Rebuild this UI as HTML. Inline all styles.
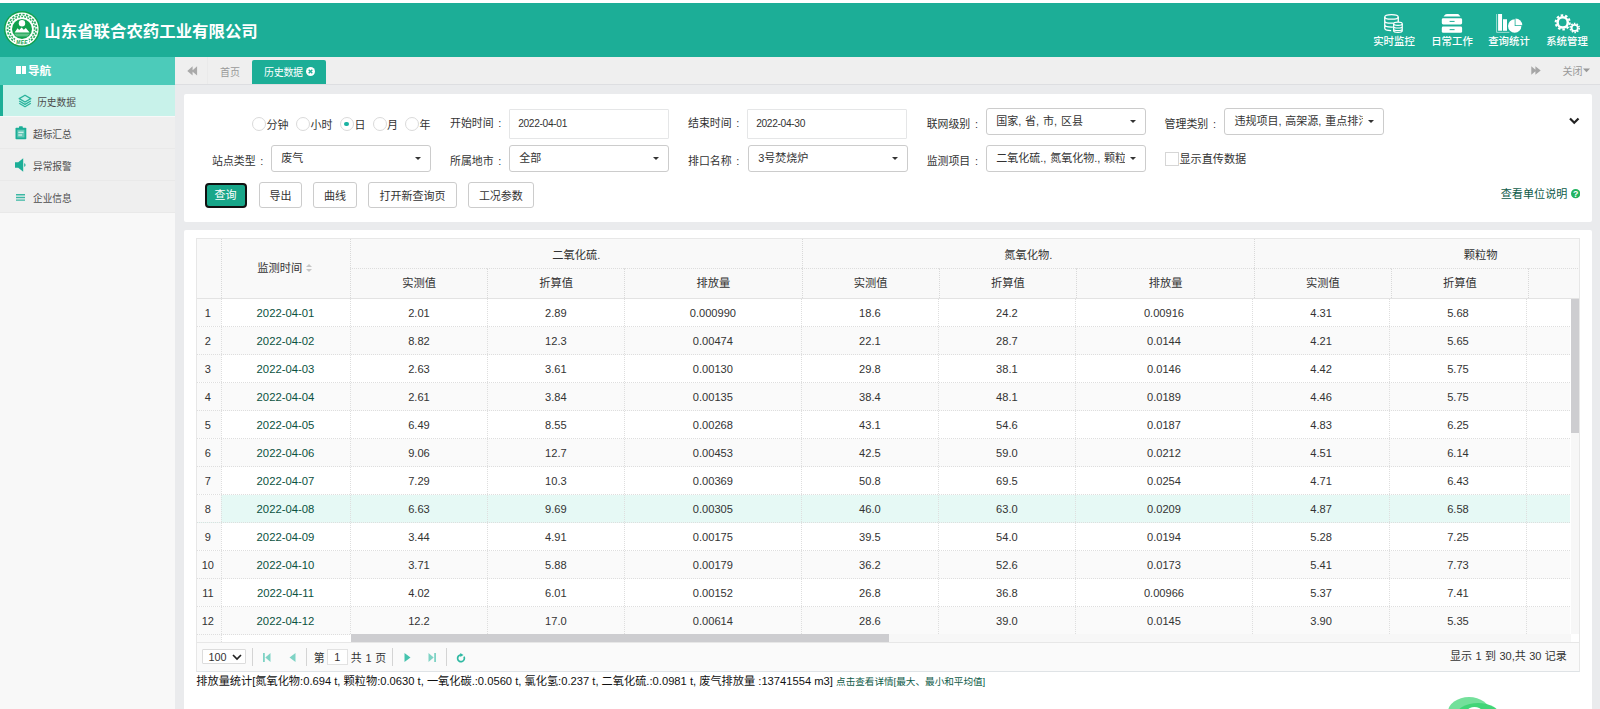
<!DOCTYPE html>
<html lang="zh-CN">
<head>
<meta charset="utf-8">
<title>历史数据</title>
<style>
*{box-sizing:border-box}
html,body{margin:0;padding:0}
body{width:1600px;height:709px;overflow:hidden;position:relative;background:#eaebed;font-family:"Liberation Sans","Noto Sans CJK SC",sans-serif;font-size:11px;color:#333;line-height:1}
.abs{position:absolute}
#strip{position:absolute;left:0;top:0;width:1600px;height:3px;background:#fff}
#hdr{position:absolute;left:0;top:3px;width:1600px;height:54px;background:#1cae97}
#logo{position:absolute;left:4.3px;top:8.2px;width:36px;height:36px}
#title{position:absolute;left:44.3px;top:16.5px;font-size:16.43px;font-weight:bold;color:#fff;line-height:22px;white-space:nowrap;letter-spacing:0}
.tm{position:absolute;top:0;width:58px;height:54px;color:#fff;text-align:center}
.tm svg{position:absolute;top:0;left:0}
.tm span{position:absolute;left:0;width:58px;top:32.6px;font-size:10.4px;line-height:12px;font-weight:500;white-space:nowrap}
#side{position:absolute;left:0;top:57px;width:175px;height:652px;background:#f8f8f8}
#navh{position:absolute;left:0;top:0;width:175px;height:28px;background:#4ccbba;color:#fff}
#navh .ic{position:absolute;left:16px;top:9px;width:10px;height:8px}
#navh .ic:before,#navh .ic:after{content:"";position:absolute;top:0;width:4.5px;height:8px;background:#fff}
#navh .ic:before{left:0}#navh .ic:after{left:5.5px}
#navh span{position:absolute;left:28px;top:7px;font-size:11.6px;font-weight:bold;line-height:14px}
.mi{position:absolute;left:0;width:175px;height:32px;background:#efefef;border-bottom:1px solid #e9e9e9;color:#4d4d4d;font-size:9.7px}
.mi span{position:absolute;left:33px;top:12.4px;line-height:12px;white-space:nowrap}
.mi svg{position:absolute}
.mi.act{background:#c8f2ea;border-left:3px solid #1cae97;border-bottom:none}
#tabs{position:absolute;left:175px;top:57px;width:1425px;height:28px;background:#efefef;border-bottom:1px solid #dddee1}
#tabs .lb{position:absolute;left:0;top:0;width:33px;height:27px;border-right:1px solid #eaeaea}
#tabs .home{position:absolute;left:45px;top:9.8px;font-size:10px;color:#999;line-height:12px}
#tabs .cur{position:absolute;left:77px;top:3px;width:74px;height:24px;background:#1cae97;border-radius:2px 2px 0 0;color:#fff;font-size:10px}
#tabs .cur span{position:absolute;left:12px;top:6.7px;line-height:12px;white-space:nowrap;letter-spacing:-0.3px}
#tabs .close{position:absolute;right:10px;top:9px;font-size:10px;color:#999;line-height:12px}
.panel{position:absolute;left:184px;width:1408px;background:#fff;border-radius:2px}
.p1{top:94px;height:127.5px}
.p2{top:230px;height:490px}
.lbl{position:absolute;font-size:10.9px;line-height:14px;color:#333;white-space:nowrap}
.inp{position:absolute;height:29.5px;width:160px;border:1px solid #e5e6e7;border-radius:1px;background:#fff;font-size:10.2px;letter-spacing:-0.33px;line-height:27.5px;padding-left:8.2px;color:#333}
.sel{position:absolute;height:26.5px;width:160px;border:1px solid #ccc;border-radius:3px;background:#fff;font-size:10.9px;line-height:24px;padding-left:9.2px;color:#333;white-space:nowrap;overflow:hidden}
.sel i{position:absolute;right:9.5px;top:11px;width:0;height:0;border-left:3.4px solid transparent;border-right:3.4px solid transparent;border-top:3.6px solid #333}
.sel .tx{display:block;overflow:hidden;white-space:nowrap;word-spacing:0.8px;font-size:11px}
.rad{position:absolute;width:14.2px;height:14.2px;border:1.1px solid #dadada;border-radius:50%;background:#fff;top:23.1px;margin-left:-0.3px}
.rad.on:after{content:"";position:absolute;left:3.6px;top:3.6px;width:4.8px;height:4.8px;border-radius:50%;background:#1bb3a2}
.rl{position:absolute;top:23.5px;font-size:11px;line-height:14px;color:#333;white-space:nowrap}
.btn{position:absolute;top:87.7px;height:26.8px;border:1px solid #ccc;border-radius:3px;background:#fff;font-size:11px;line-height:27.4px;text-align:center;color:#333;white-space:nowrap}
.btn.pri{top:88.6px;height:25.6px;background:#18a689;border:2px solid #111;color:#fff;line-height:21.8px;border-radius:4px;text-indent:-1px}
/* grid */
.grid{position:absolute;left:12.25px;top:8px;width:1383.25px;height:404px;border:1px solid #e7e7e7;border-bottom:none;overflow:hidden;background:#fff}
.gh{position:absolute;left:-1.4px;top:-1px;width:1600px;height:60.5px;background:#f9f9f9;border-bottom:1px solid #e3e3e3}
.hc{position:absolute;text-align:center;font-size:11.25px;color:#333;border-left:1px dotted #d9d9d9;white-space:nowrap}
.gb{position:absolute;left:-1.4px;top:59.5px;width:1374.5px;height:344px;overflow:hidden}
.r{position:absolute;left:0;width:1600px;height:28px;background:#fff;border-bottom:1px dotted #dedede}
.r.alt{background:#fafafa}
.r.hl{background:#e6f9f5}
.c{position:absolute;top:0;height:27px;line-height:28.1px;text-align:center;font-size:11.1px;color:#333;border-left:1px dotted #dedede;white-space:nowrap}
.c.n{background:#fafafa;border-left:none;height:27px;font-size:11px}
.c.d{color:#0b5241;background:inherit;font-size:11.3px;padding-right:1px}
.r .c.d{}
.sort{display:inline-block;position:relative;width:7px;height:9px;margin-left:3.5px;vertical-align:-1px}
.sort i,.sort b{position:absolute;left:0;width:0;height:0;border-left:3.2px solid transparent;border-right:3.2px solid transparent}
.sort i{top:0;border-bottom:3.6px solid #c6c6c6}
.sort b{top:5px;border-top:3.6px solid #c6c6c6}
.vsb{position:absolute;left:1373.5px;top:59.5px;width:8px;height:344px;background:#f7f7f7}
.vth{position:absolute;left:0.5px;top:0;width:7.5px;height:134.6px;background:#cdcdd0}
.hsb{position:absolute;left:153.25px;top:395px;width:1229px;height:8px;background:#f7f7f7}
.hth{position:absolute;left:0;top:0;width:538px;height:8px;background:#cdcdd0}
/* pager */
.pager{position:absolute;left:12.25px;top:412px;width:1383.25px;height:29.75px;background:#fafafa;border:1px solid #e7e7e7;border-bottom:1.5px solid #dfe3e6;font-size:11px;color:#333}
.pager .sp{position:absolute;top:4.5px;width:1px;height:18px;background:#d4d4d4}
.pager svg{position:absolute}
.stats{position:absolute;left:12.25px;top:443.8px;font-size:11.19px;line-height:14px;color:#111;white-space:nowrap}
.stats a{color:#0d5a48;text-decoration:none;font-size:9.6px}
.blob{position:absolute;left:1447.5px;top:696.8px;width:42px;height:30px;border-radius:50%;background:#74e09b}
.blob2{position:absolute;left:1456px;top:702.5px;width:44px;height:26px;border-radius:50%;background:#42d577}
.corner{position:absolute;left:1373.5px;top:394.8px;width:9px;height:9px;background:#fff}
.co{margin-left:4.75px}
.blob3{position:absolute;left:1467.5px;top:707.4px;width:13px;height:6px;border-radius:50%;background:#fff}

</style>
</head>
<body>
<div id="strip"></div>
<div id="hdr">
<svg id="logo" viewBox="0 0 36 36">
<circle cx="18" cy="18" r="18" fill="#12a14e"/>
<circle cx="18" cy="18" r="16.600" fill="#fff"/>
<circle cx="18" cy="18" r="14.500" fill="none" stroke="#2aab60" stroke-width="1.700" stroke-dasharray="2.200 1.400"/>
<circle cx="18" cy="18" r="12.500" fill="none" stroke="#2aab60" stroke-width="1.500" stroke-dasharray="1.900 1.200" stroke-dashoffset="1.200"/>
<path d="M11.500 27.500 L24.500 27.500 L26 33 L10 33 Z" fill="#fff"/>
<circle cx="18" cy="18" r="10.800" fill="#fff"/>
<circle cx="18" cy="18" r="10" fill="#12a14e"/>
<circle cx="18" cy="12.200" r="3.200" fill="#fff"/>
<path d="M10.600 21.600 L13.600 17.300 L15.200 19 L17.600 16.400 L19.800 18.800 L21.800 17 L25.600 21.600 Z" fill="#fff"/>
<path d="M10.600 23.200 H25.400 M11.800 24.800 H24.200" stroke="#8fd6ad" stroke-width="0.900" fill="none"/>
<text x="18" y="32.600" font-size="4.800" font-weight="bold" font-style="italic" text-anchor="middle" fill="#12a14e" font-family="Liberation Sans, sans-serif" letter-spacing="0.300">MEE</text>
</svg>
<div id="title">山东省联合农药工业有限公司</div>
<div class="tm" style="left:1365px"><svg width="58" height="34" viewBox="0 0 58 34"><g fill="none" stroke="#fff" stroke-width="1.300"><ellipse cx="26.500" cy="13.900" rx="6.750" ry="2.250"/><path d="M19.750 13.900v11.400c0 1.200 2.600 2.250 6.400 2.250M19.750 17.900c0 1.200 2.900 2.250 6.750 2.250 0.800 0 1.500 0 2.200-0.100M19.750 21.800c0 1.200 2.900 2.250 6.750 2.250h1.400M33.250 13.900v5"/><ellipse cx="32.950" cy="20.700" rx="4.300" ry="1.600" stroke-width="1.200"/><path d="M28.650 20.700v7c0 .900 1.900 1.600 4.300 1.600s4.300-.7 4.300-1.600v-7M28.650 23.400c0 .900 1.900 1.600 4.300 1.600s4.300-.7 4.300-1.600M28.650 25.900c0 .900 1.900 1.600 4.300 1.600s4.300-.7 4.300-1.600" stroke-width="1.200"/></g></svg><span>实时监控</span></div>
<div class="tm" style="left:1423px"><svg width="58" height="34" viewBox="0 0 58 34"><g fill="#fff"><path d="M24.300 11h10.400q1 0 1.500 0.900l1.300 1.500H20.500l1.300-1.500q.5-.9 2.500-.9z"/><rect x="18.800" y="15.300" width="20.300" height="6.200" rx="1.400"/><rect x="18.800" y="23.600" width="20.300" height="6.200" rx="1.400"/></g><path d="M27 18.400h4.200M27 26.650h4.200" stroke="#1cae97" stroke-width="1" stroke-linecap="round"/></svg><span>日常工作</span></div>
<div class="tm" style="left:1480px"><svg width="58" height="34" viewBox="0 0 58 34"><path d="M16.600 11.050v18.300h12.800" fill="none" stroke="#fff" stroke-width="0.700" opacity=".85"/><path d="M18.100 11.050h3.950v16.650h-3.950z M23 16.300h4v11.400h-4z" fill="#fff"/><path d="M34.700 16.350a6.700 6.700 0 1 0 6.700 6.700H34.700z" fill="#fff"/><path d="M35.500 15.500a6.800 6.800 0 0 1 6.800 6.800h-6.800z" fill="#fff"/></svg><span>查询统计</span></div>
<div class="tm" style="left:1538px"><svg width="58" height="34" viewBox="0 0 58 34"><g fill="none" stroke="#fff"><circle cx="24.700" cy="19.400" r="5.100" stroke-width="2.500"/><circle cx="24.700" cy="19.400" r="7.050" stroke-width="2.100" stroke-dasharray="2.500 1.930"/><circle cx="36.700" cy="24.900" r="3.050" stroke-width="1.700"/><circle cx="36.700" cy="24.900" r="4.450" stroke-width="1.600" stroke-dasharray="1.550 1.246"/></g></svg><span>系统管理</span></div>
</div>
<div id="side">
<div id="navh"><div class="ic"></div><span>导航</span></div>
<div class="mi act" style="top:28px;height:31.200px"><svg style="left:15px;top:9px" width="14" height="14" viewBox="0 0 14 14"><g fill="none" stroke="#2bb39d" stroke-width="1.300" stroke-linejoin="round"><path d="M7 1.200L12.800 4.600 7 8 1.200 4.600z"/><path d="M1.200 7L7 10.400 12.800 7"/><path d="M1.200 9.300L7 12.700 12.800 9.300"/></g></svg><span style="left:34.200px;top:11.600px">历史数据</span></div>
<div class="mi" style="top:59.500px"><svg style="left:14.500px;top:9.500px" width="12" height="14" viewBox="0 0 12 14"><rect x="0.500" y="1.700" width="10.800" height="11.600" rx="0.800" fill="#1cae97"/><rect x="4" y="0.300" width="3.800" height="2.400" rx="0.600" fill="#1cae97"/><rect x="2.300" y="3.700" width="7.200" height="7.800" fill="#62c8b6"/><path d="M3.300 6.300h5.200M3.300 9h3.800" stroke="#fff" stroke-width="1.100" opacity=".92"/></svg><span>超标汇总</span></div>
<div class="mi" style="top:91.500px"><svg style="left:13.800px;top:9.500px" width="12" height="14" viewBox="0 0 12 14"><path d="M1 4.200h3.200l5-4v13.600l-5-4H1z" fill="#1cae97"/><path d="M10.300 5.600a1.800 1.800 0 0 1 0 2.800" stroke="#1cae97" stroke-width="1.100" fill="none"/></svg><span>异常报警</span></div>
<div class="mi" style="top:123.500px"><svg style="left:15.600px;top:13.100px" width="9.500" height="8" viewBox="0 0 9.500 8"><path d="M0 0.800h9.500M0 3.450h9.500M0 6.100h9.500" stroke="#3bb8a4" stroke-width="1.400"/></svg><span>企业信息</span></div>
</div>
<div id="tabs">
<div class="lb"><svg class="abs" style="left:12px;top:8.600px" width="11" height="10" viewBox="0 0 11 10"><path d="M5.600 0.200v9.400L0.300 4.900z M10.100 0.200v9.400L4.800 4.900z" fill="#a9a9a9"/></svg></div>
<div class="home">首页</div>
<div class="cur"><span>历史数据</span><svg class="abs" style="left:53.500px;top:7.200px" width="9" height="9" viewBox="0 0 9 9"><circle cx="4.500" cy="4.500" r="4.500" fill="#fff"/><path d="M2.700 2.700l3.600 3.600M6.300 2.700l-3.600 3.600" stroke="#1cae97" stroke-width="1.400"/></svg></div>
<svg class="abs" style="left:1356px;top:8.600px" width="10" height="9" viewBox="0 0 10 9"><path d="M0.300 0.200v8.600L5.300 4.500z M4.400 0.200v8.600L9.700 4.500z" fill="#a6a6a6"/></svg>
<div class="close">关闭<svg width="7" height="5" viewBox="0 0 7 5" style="vertical-align:2.200px;margin-left:0.500px"><path d="M0 0.600h7L3.500 4.300z" fill="#999"/></svg></div>
</div>
<div class="panel p1">
<div class="rad" style="left:68px"></div><div class="rl" style="left:82.500px">分钟</div>
<div class="rad" style="left:112px"></div><div class="rl" style="left:126.500px">小时</div>
<div class="rad on" style="left:156px"></div><div class="rl" style="left:170.500px">日</div>
<div class="rad" style="left:189px"></div><div class="rl" style="left:203px">月</div>
<div class="rad" style="left:221px"></div><div class="rl" style="left:235.500px">年</div>
<div class="lbl" style="left:266px;top:21.500px">开始时间<span class="co">:</span></div>
<div class="inp" style="left:325px;top:15px">2022-04-01</div>
<div class="lbl" style="left:504px;top:21.500px">结束时间<span class="co">:</span></div>
<div class="inp" style="left:563px;top:15px">2022-04-30</div>
<div class="lbl" style="left:742.700px;top:23px">联网级别<span class="co">:</span></div>
<div class="sel" style="left:802px;top:14px"><span class="tx" style="width:128px">国家, 省, 市, 区县</span><i></i></div>
<div class="lbl" style="left:980.600px;top:23px">管理类别<span class="co">:</span></div>
<div class="sel" style="left:1040.250px;top:14px"><span class="tx" style="width:128.500px">违规项目, 高架源, 重点排污单位</span><i></i></div>
<div class="lbl" style="left:28px;top:59.600px">站点类型<span class="co">:</span></div>
<div class="sel" style="left:87px;top:51px"><span class="tx">废气</span><i></i></div>
<div class="lbl" style="left:266px;top:59.600px">所属地市<span class="co">:</span></div>
<div class="sel" style="left:325px;top:51px"><span class="tx">全部</span><i></i></div>
<div class="lbl" style="left:504px;top:59.600px">排口名称<span class="co">:</span></div>
<div class="sel" style="left:564px;top:51px"><span class="tx">3号焚烧炉</span><i></i></div>
<div class="lbl" style="left:742.700px;top:59.600px">监测项目<span class="co">:</span></div>
<div class="sel" style="left:802px;top:51px"><span class="tx" style="width:129.200px">二氧化硫., 氮氧化物., 颗粒物</span><i></i></div>
<div class="abs" style="left:981px;top:58.250px;width:14px;height:14px;border:1px solid #d6d6d6;background:#fff"></div>
<div class="lbl" style="left:995.500px;top:57.900px;font-size:11.100px">显示直传数据</div>
<div class="btn pri" style="left:21px;width:42px">查询</div>
<div class="btn" style="left:75px;width:43px">导出</div>
<div class="btn" style="left:129px;width:44px">曲线</div>
<div class="btn" style="left:184px;width:89px">打开新查询页</div>
<div class="btn" style="left:284px;width:65.750px">工况参数</div>
<svg class="abs" style="left:1385px;top:22.500px" width="10.500" height="8" viewBox="0 0 10.500 8"><path d="M1 1.500l4.250 4.200L9.500 1.500" fill="none" stroke="#222" stroke-width="2.200"/></svg>
<div class="lbl" style="left:1316.750px;top:93px;font-size:11.100px;color:#0d5a48">查看单位说明</div>
<svg class="abs" style="left:1386.750px;top:95.400px" width="9.250" height="9.250" viewBox="0 0 10 10"><circle cx="5" cy="5" r="5" fill="#23b35f"/><text x="5" y="8.300" font-size="9.500" font-weight="bold" text-anchor="middle" fill="#fff" font-family="Liberation Sans, sans-serif">?</text></svg>
</div>
<div class="panel p2">
<div class="grid">
<div class="gh">
<div class="hc" style="left:0;top:0;width:25px;height:60px;border-left:none"></div>
<div class="hc" style="left:25px;top:0;width:129.25px;height:60px;line-height:60px;padding-right:2px">监测时间<span class="sort"><i></i><b></b></span></div>
<div class="hc" style="left:154.25px;top:0;width:451.50px;height:30px;line-height:35px">二氧化硫.</div>
<div class="hc" style="left:154.25px;top:30px;width:137.00px;height:30px;line-height:29px;border-top:1px dotted #ddd">实测值</div>
<div class="hc" style="left:291.25px;top:30px;width:137.00px;height:30px;line-height:29px;border-top:1px dotted #ddd">折算值</div>
<div class="hc" style="left:428.25px;top:30px;width:177.50px;height:30px;line-height:29px;border-top:1px dotted #ddd">排放量</div>
<div class="hc" style="left:605.75px;top:0;width:452.50px;height:30px;line-height:35px">氮氧化物.</div>
<div class="hc" style="left:605.75px;top:30px;width:137.00px;height:30px;line-height:29px;border-top:1px dotted #ddd">实测值</div>
<div class="hc" style="left:742.75px;top:30px;width:137.50px;height:30px;line-height:29px;border-top:1px dotted #ddd">折算值</div>
<div class="hc" style="left:880.25px;top:30px;width:178.00px;height:30px;line-height:29px;border-top:1px dotted #ddd">排放量</div>
<div class="hc" style="left:1058.25px;top:0;width:452.00px;height:30px;line-height:35px">颗粒物</div>
<div class="hc" style="left:1058.25px;top:30px;width:136.75px;height:30px;line-height:29px;border-top:1px dotted #ddd">实测值</div>
<div class="hc" style="left:1195.00px;top:30px;width:137.00px;height:30px;line-height:29px;border-top:1px dotted #ddd">折算值</div>
<div class="hc" style="left:1332.00px;top:30px;width:178.25px;height:30px;line-height:29px;border-top:1px dotted #ddd">排放量</div>
</div>
<div class="gb">
<div class="r" style="top:0.00px">
<span class="c n" style="left:0;width:25px;padding-right:1px">1</span>
<span class="c d" style="left:25px;width:129.25px">2022-04-01</span>
<span class="c" style="left:154.25px;width:136.75px">2.01</span>
<span class="c" style="left:291.00px;width:137.00px">2.89</span>
<span class="c" style="left:428.00px;width:177.00px">0.000990</span>
<span class="c" style="left:605.00px;width:137.00px">18.6</span>
<span class="c" style="left:742.00px;width:137.00px">24.2</span>
<span class="c" style="left:879.00px;width:177.25px">0.00916</span>
<span class="c" style="left:1056.25px;width:137.00px">4.31</span>
<span class="c" style="left:1193.25px;width:136.75px">5.68</span>
<span class="c" style="left:1330.00px;width:120px"></span>
</div>
<div class="r alt" style="top:28.00px">
<span class="c n" style="left:0;width:25px;padding-right:1px">2</span>
<span class="c d" style="left:25px;width:129.25px">2022-04-02</span>
<span class="c" style="left:154.25px;width:136.75px">8.82</span>
<span class="c" style="left:291.00px;width:137.00px">12.3</span>
<span class="c" style="left:428.00px;width:177.00px">0.00474</span>
<span class="c" style="left:605.00px;width:137.00px">22.1</span>
<span class="c" style="left:742.00px;width:137.00px">28.7</span>
<span class="c" style="left:879.00px;width:177.25px">0.0144</span>
<span class="c" style="left:1056.25px;width:137.00px">4.21</span>
<span class="c" style="left:1193.25px;width:136.75px">5.65</span>
<span class="c" style="left:1330.00px;width:120px"></span>
</div>
<div class="r" style="top:56.00px">
<span class="c n" style="left:0;width:25px;padding-right:1px">3</span>
<span class="c d" style="left:25px;width:129.25px">2022-04-03</span>
<span class="c" style="left:154.25px;width:136.75px">2.63</span>
<span class="c" style="left:291.00px;width:137.00px">3.61</span>
<span class="c" style="left:428.00px;width:177.00px">0.00130</span>
<span class="c" style="left:605.00px;width:137.00px">29.8</span>
<span class="c" style="left:742.00px;width:137.00px">38.1</span>
<span class="c" style="left:879.00px;width:177.25px">0.0146</span>
<span class="c" style="left:1056.25px;width:137.00px">4.42</span>
<span class="c" style="left:1193.25px;width:136.75px">5.75</span>
<span class="c" style="left:1330.00px;width:120px"></span>
</div>
<div class="r alt" style="top:84.00px">
<span class="c n" style="left:0;width:25px;padding-right:1px">4</span>
<span class="c d" style="left:25px;width:129.25px">2022-04-04</span>
<span class="c" style="left:154.25px;width:136.75px">2.61</span>
<span class="c" style="left:291.00px;width:137.00px">3.84</span>
<span class="c" style="left:428.00px;width:177.00px">0.00135</span>
<span class="c" style="left:605.00px;width:137.00px">38.4</span>
<span class="c" style="left:742.00px;width:137.00px">48.1</span>
<span class="c" style="left:879.00px;width:177.25px">0.0189</span>
<span class="c" style="left:1056.25px;width:137.00px">4.46</span>
<span class="c" style="left:1193.25px;width:136.75px">5.75</span>
<span class="c" style="left:1330.00px;width:120px"></span>
</div>
<div class="r" style="top:112.00px">
<span class="c n" style="left:0;width:25px;padding-right:1px">5</span>
<span class="c d" style="left:25px;width:129.25px">2022-04-05</span>
<span class="c" style="left:154.25px;width:136.75px">6.49</span>
<span class="c" style="left:291.00px;width:137.00px">8.55</span>
<span class="c" style="left:428.00px;width:177.00px">0.00268</span>
<span class="c" style="left:605.00px;width:137.00px">43.1</span>
<span class="c" style="left:742.00px;width:137.00px">54.6</span>
<span class="c" style="left:879.00px;width:177.25px">0.0187</span>
<span class="c" style="left:1056.25px;width:137.00px">4.83</span>
<span class="c" style="left:1193.25px;width:136.75px">6.25</span>
<span class="c" style="left:1330.00px;width:120px"></span>
</div>
<div class="r alt" style="top:140.00px">
<span class="c n" style="left:0;width:25px;padding-right:1px">6</span>
<span class="c d" style="left:25px;width:129.25px">2022-04-06</span>
<span class="c" style="left:154.25px;width:136.75px">9.06</span>
<span class="c" style="left:291.00px;width:137.00px">12.7</span>
<span class="c" style="left:428.00px;width:177.00px">0.00453</span>
<span class="c" style="left:605.00px;width:137.00px">42.5</span>
<span class="c" style="left:742.00px;width:137.00px">59.0</span>
<span class="c" style="left:879.00px;width:177.25px">0.0212</span>
<span class="c" style="left:1056.25px;width:137.00px">4.51</span>
<span class="c" style="left:1193.25px;width:136.75px">6.14</span>
<span class="c" style="left:1330.00px;width:120px"></span>
</div>
<div class="r" style="top:168.00px">
<span class="c n" style="left:0;width:25px;padding-right:1px">7</span>
<span class="c d" style="left:25px;width:129.25px">2022-04-07</span>
<span class="c" style="left:154.25px;width:136.75px">7.29</span>
<span class="c" style="left:291.00px;width:137.00px">10.3</span>
<span class="c" style="left:428.00px;width:177.00px">0.00369</span>
<span class="c" style="left:605.00px;width:137.00px">50.8</span>
<span class="c" style="left:742.00px;width:137.00px">69.5</span>
<span class="c" style="left:879.00px;width:177.25px">0.0254</span>
<span class="c" style="left:1056.25px;width:137.00px">4.71</span>
<span class="c" style="left:1193.25px;width:136.75px">6.43</span>
<span class="c" style="left:1330.00px;width:120px"></span>
</div>
<div class="r alt hl" style="top:196.00px">
<span class="c n" style="left:0;width:25px;padding-right:1px">8</span>
<span class="c d" style="left:25px;width:129.25px">2022-04-08</span>
<span class="c" style="left:154.25px;width:136.75px">6.63</span>
<span class="c" style="left:291.00px;width:137.00px">9.69</span>
<span class="c" style="left:428.00px;width:177.00px">0.00305</span>
<span class="c" style="left:605.00px;width:137.00px">46.0</span>
<span class="c" style="left:742.00px;width:137.00px">63.0</span>
<span class="c" style="left:879.00px;width:177.25px">0.0209</span>
<span class="c" style="left:1056.25px;width:137.00px">4.87</span>
<span class="c" style="left:1193.25px;width:136.75px">6.58</span>
<span class="c" style="left:1330.00px;width:120px"></span>
</div>
<div class="r" style="top:224.00px">
<span class="c n" style="left:0;width:25px;padding-right:1px">9</span>
<span class="c d" style="left:25px;width:129.25px">2022-04-09</span>
<span class="c" style="left:154.25px;width:136.75px">3.44</span>
<span class="c" style="left:291.00px;width:137.00px">4.91</span>
<span class="c" style="left:428.00px;width:177.00px">0.00175</span>
<span class="c" style="left:605.00px;width:137.00px">39.5</span>
<span class="c" style="left:742.00px;width:137.00px">54.0</span>
<span class="c" style="left:879.00px;width:177.25px">0.0194</span>
<span class="c" style="left:1056.25px;width:137.00px">5.28</span>
<span class="c" style="left:1193.25px;width:136.75px">7.25</span>
<span class="c" style="left:1330.00px;width:120px"></span>
</div>
<div class="r alt" style="top:252.00px">
<span class="c n" style="left:0;width:25px;padding-right:1px">10</span>
<span class="c d" style="left:25px;width:129.25px">2022-04-10</span>
<span class="c" style="left:154.25px;width:136.75px">3.71</span>
<span class="c" style="left:291.00px;width:137.00px">5.88</span>
<span class="c" style="left:428.00px;width:177.00px">0.00179</span>
<span class="c" style="left:605.00px;width:137.00px">36.2</span>
<span class="c" style="left:742.00px;width:137.00px">52.6</span>
<span class="c" style="left:879.00px;width:177.25px">0.0173</span>
<span class="c" style="left:1056.25px;width:137.00px">5.41</span>
<span class="c" style="left:1193.25px;width:136.75px">7.73</span>
<span class="c" style="left:1330.00px;width:120px"></span>
</div>
<div class="r" style="top:280.00px">
<span class="c n" style="left:0;width:25px;padding-right:1px">11</span>
<span class="c d" style="left:25px;width:129.25px">2022-04-11</span>
<span class="c" style="left:154.25px;width:136.75px">4.02</span>
<span class="c" style="left:291.00px;width:137.00px">6.01</span>
<span class="c" style="left:428.00px;width:177.00px">0.00152</span>
<span class="c" style="left:605.00px;width:137.00px">26.8</span>
<span class="c" style="left:742.00px;width:137.00px">36.8</span>
<span class="c" style="left:879.00px;width:177.25px">0.00966</span>
<span class="c" style="left:1056.25px;width:137.00px">5.37</span>
<span class="c" style="left:1193.25px;width:136.75px">7.41</span>
<span class="c" style="left:1330.00px;width:120px"></span>
</div>
<div class="r alt" style="top:308.00px">
<span class="c n" style="left:0;width:25px;padding-right:1px">12</span>
<span class="c d" style="left:25px;width:129.25px">2022-04-12</span>
<span class="c" style="left:154.25px;width:136.75px">12.2</span>
<span class="c" style="left:291.00px;width:137.00px">17.0</span>
<span class="c" style="left:428.00px;width:177.00px">0.00614</span>
<span class="c" style="left:605.00px;width:137.00px">28.6</span>
<span class="c" style="left:742.00px;width:137.00px">39.0</span>
<span class="c" style="left:879.00px;width:177.25px">0.0145</span>
<span class="c" style="left:1056.25px;width:137.00px">3.90</span>
<span class="c" style="left:1193.25px;width:136.75px">5.35</span>
<span class="c" style="left:1330.00px;width:120px"></span>
</div>
<div class="r" style="top:336.00px">
<span class="c n" style="left:0;width:25px"></span>
<span class="c d" style="left:25px;width:129.25px"></span>
</div>
</div>
<div class="vsb"><div class="vth"></div></div>
<div class="hsb"><div class="hth"></div></div>
<div class="corner"></div>
</div><div class="pager"><div class="abs" style="left:-1px;top:0.500px;width:1383.250px;height:28px">
<div class="abs" style="left:5.750px;top:5.250px;width:44px;height:15.500px;border:1px solid #dcdcdc;background:#fff;border-radius:1px"><span class="abs" style="left:5.500px;top:0;line-height:14px;font-size:10.800px">100</span><svg class="abs" style="left:29px;top:4px" width="10" height="7" viewBox="0 0 10 7"><path d="M1 1l4 4 4-4" fill="none" stroke="#222" stroke-width="1.700"/></svg></div>
<div class="sp" style="left:55.250px"></div>
<svg style="left:66.500px;top:9.750px" width="8" height="9" viewBox="0 0 8 9"><path d="M0 0h1.800v9H0z M7.500 0v9L2.300 4.500z" fill="#7fd3c5"/></svg>
<svg style="left:92.250px;top:9.750px" width="7" height="9" viewBox="0 0 7 9"><path d="M6.500 0v9L0.500 4.500z" fill="#7fd3c5"/></svg>
<div class="sp" style="left:109.500px"></div>
<span class="abs" style="left:117.500px;top:7px;line-height:14px;font-size:10.800px">第</span>
<div class="abs" style="left:130.250px;top:5.250px;width:21.750px;height:16.250px;border:1px solid #e2e2e2;background:#fff;text-align:center;line-height:15px;font-size:10.800px">1</div>
<span class="abs" style="left:154.500px;top:7px;line-height:14px;font-size:10.900px;word-spacing:0.800px;white-space:nowrap">共 1 页</span>
<div class="sp" style="left:195.250px"></div>
<svg style="left:207.250px;top:9.750px" width="7" height="9" viewBox="0 0 7 9"><path d="M0.500 0v9L6.500 4.500z" fill="#45c3ae"/></svg>
<svg style="left:231.500px;top:9.750px" width="8" height="9" viewBox="0 0 8 9"><path d="M6.200 0H8v9H6.200z M0.500 0v9L5.700 4.500z" fill="#7fd3c5"/></svg>
<div class="sp" style="left:249.500px"></div>
<svg style="left:260.200px;top:9.200px" width="10" height="10" viewBox="0 0 10 10"><path d="M5 1.900a3.400 3.400 0 1 0 3 1.800" fill="none" stroke="#2fb9a2" stroke-width="1.700"/><path d="M4.300 0l3.200 2-3.200 2.100z" fill="#2fb9a2"/></svg>
<span class="abs" style="left:1253.700px;top:5.200px;line-height:14px;font-size:11px;word-spacing:0.400px;white-space:nowrap">显示 1 到 30,共 30 记录</span>
</div></div>
<div class="stats">排放量统计[氮氧化物:0.694 t, 颗粒物:0.0630 t, 一氧化碳.:0.0560 t, 氯化氢:0.237 t, 二氧化硫.:0.0981 t, 废气排放量 :13741554 m3] <a>点击查看详情[最大、最小和平均值]</a></div>

</div>
<div class="blob"></div><div class="blob2"></div><div class="blob3"></div>
</body>
</html>
